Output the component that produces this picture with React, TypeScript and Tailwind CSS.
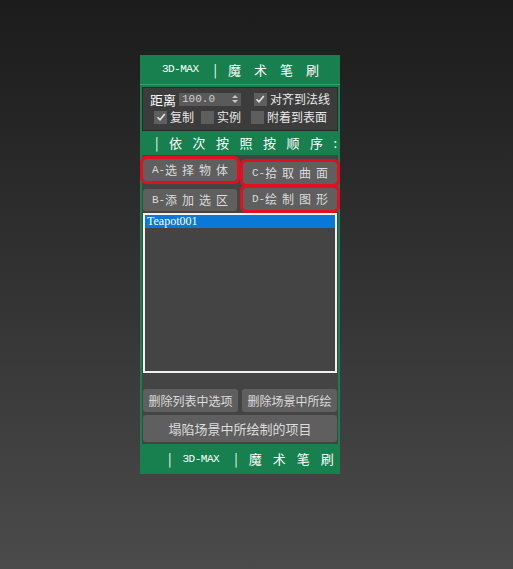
const cjk = "font-['Noto_Sans_CJK_SC','Noto_Sans',sans-serif]";
const mono = "font-['Liberation_Mono','DejaVu_Sans_Mono',monospace]";

function Check({ checked, label }: { checked?: boolean; label: string }) {
  return (
    <label className="flex items-center gap-[3px] whitespace-nowrap">
      <span className="flex h-[13px] w-[13px] shrink-0 items-center justify-center bg-[#5e5e5e]">
        {checked && (
          <svg width="10" height="10" viewBox="0 0 10 10">
            <path d="M1.5 5.2 L4 7.8 L8.8 2" fill="none" stroke="#e6e6e6" strokeWidth="1.6" />
          </svg>
        )}
      </span>
      <span className="text-[12px] leading-none text-[#e8e8e8]">{label}</span>
    </label>
  );
}

function Btn({
  label,
  prefix,
  red,
  className = "",
}: {
  label: string;
  prefix?: string;
  red?: boolean;
  className?: string;
}) {
  return (
    <button
      className={`flex h-[22px] items-center justify-center whitespace-nowrap rounded-[3px] bg-[#5f5f5f] text-[12px] text-[#dcdcdc] ${
        red ? "outline outline-[3px] outline-[#e01020]" : ""
      } ${className}`}
    >
      {prefix && <span className={`${mono} text-[11px]`}>{prefix}</span>}
      <span className={prefix ? "tracking-[5px] -mr-[5px]" : ""}>{label}</span>
    </button>
  );
}

export default function App() {
  return (
    <div className={`${cjk} h-[569px] w-full bg-gradient-to-b from-[#1c1c1c] to-[#4b4b4b] pl-[140px] pt-[55px]`}>
      <div className="w-[200px] bg-[#17804e]">
        {/* header */}
        <div className="flex h-[29px] items-center justify-center pl-[14px] text-white">
          <span className={`${mono} text-[11px] tracking-[-0.5px]`}>3D-MAX</span>
          <span className="ml-[15px] text-[13px] text-white">|</span>
          <span className="ml-[11px] whitespace-nowrap text-[13px] tracking-[13px]">魔术笔刷</span>
        </div>
        <div className="h-px bg-[#2fa468]" />

        {/* options */}
        <div className="px-[2px] pt-[2px]">
          <div className="flex h-[44px] flex-col justify-center gap-[5px] border border-[#2a2a2a] bg-[#3c3c3c] px-[7px]">
            <div className="-mt-[2px] flex items-center">
              <span className="whitespace-nowrap text-[13px] leading-none text-white">距离</span>
              <div className="ml-[3px] flex h-[13px] w-[64px] items-center justify-between bg-[#5a5a5a] px-[3px]">
                <span className={`${mono} text-[11px] leading-none text-[#d0d0d0]`}>100.0</span>
                <svg width="6" height="10" viewBox="0 0 6 10">
                  <path d="M0 4 L3 1 L6 4 Z M0 6 L3 9 L6 6 Z" fill="#c8c8c8" />
                </svg>
              </div>
              <div className="ml-[13px]">
                <Check checked label="对齐到法线" />
              </div>
            </div>
            <div className="flex items-center">
              <div className="w-[51px] pl-[4px]">
                <Check checked label="复制" />
              </div>
              <div className="w-[50px]">
                <Check label="实例" />
              </div>
              <Check label="附着到表面" />
            </div>
          </div>
        </div>

        {/* marquee strip, clipped at the right like the running text */}
        <div className="flex h-[24px] items-center overflow-hidden whitespace-nowrap pl-[15px] text-[13px] tracking-[10.5px] text-white">
          |依次按照按顺序:
        </div>

        {/* body */}
        <div className="mx-[2px] bg-[#444444] px-[1px] pt-[4px]">
          <div className="grid grid-cols-2 gap-x-[6px] gap-y-[5px]">
            <Btn red prefix="A-" label="选择物体" />
            <Btn red prefix="C-" label="拾取曲面" className="mt-[3px]" />
            <Btn prefix="B-" label="添加选区" />
            <Btn red prefix="D-" label="绘制图形" className="-mt-[1px]" />
          </div>

          <div className="mt-[2px] h-[160px] border-2 border-[#f0f0f0] bg-[#444444]">
            <div className="bg-[#0a78d6] pl-[2px] font-['Liberation_Serif',serif] text-[12px] leading-[13px] text-white">
              Teapot001
            </div>
          </div>

          <div className="mt-[16px] grid grid-cols-2 gap-x-[4px]">
            <Btn label="删除列表中选项" className="h-[23px]" />
            <Btn label="删除场景中所绘" className="h-[23px]" />
          </div>
          <Btn label="塌陷场景中所绘制的项目" className="mt-[3px] h-[27px] w-full text-[13px]" />
          <div className="h-[2px]" />
        </div>

        {/* footer */}
        <div className="flex h-[30px] items-center whitespace-nowrap pl-[28px] text-white">
          <span className="shrink-0 text-[13px]">|</span>
          <span className={`${mono} ml-[11px] shrink-0 text-[11px] tracking-[-0.5px]`}>3D-MAX</span>
          <span className="ml-[15px] shrink-0 text-[13px]">|</span>
          <span className="ml-[11px] -mr-[11px] shrink-0 text-[13px] tracking-[11px]">魔术笔刷</span>
        </div>
      </div>
    </div>
  );
}
